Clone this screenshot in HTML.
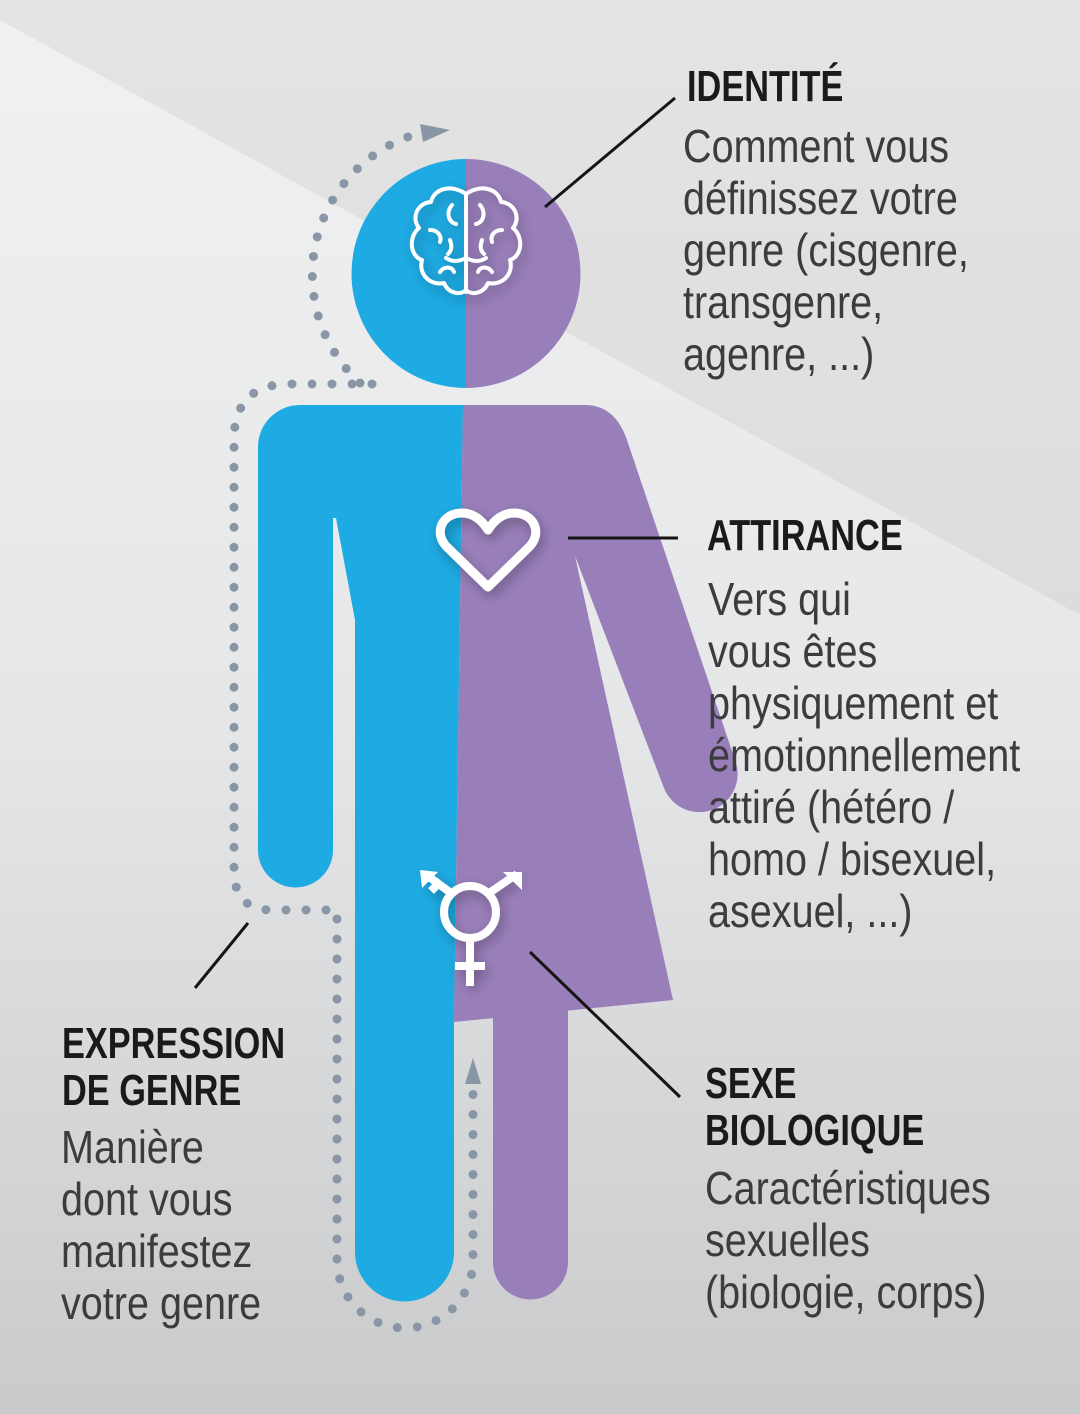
<!DOCTYPE html>
<html><head><meta charset="utf-8">
<style>
html,body{margin:0;padding:0}
body{width:1080px;height:1414px;position:relative;overflow:hidden;font-family:"Liberation Sans",sans-serif}
svg{position:absolute;left:0;top:0}
.t{position:absolute;font-weight:bold;font-size:44px;line-height:47px;color:#1a1a1a;transform:scaleX(0.78);transform-origin:0 0;white-space:nowrap}
.b{position:absolute;font-size:46px;line-height:52px;color:#3c3c3e;transform:scaleX(0.86);transform-origin:0 0;white-space:nowrap}
</style></head><body>
<svg width="1080" height="1414" viewBox="0 0 1080 1414">
<defs>
<linearGradient id="bg" x1="0" y1="0" x2="0" y2="1">
<stop offset="0" stop-color="#f1f1f2"/><stop offset="0.5" stop-color="#e6e7e8"/><stop offset="1" stop-color="#c9cacc"/>
</linearGradient>
<filter id="sh" x="-50%" y="-50%" width="200%" height="200%"><feDropShadow dx="3" dy="5" stdDeviation="6" flood-color="#000" flood-opacity="0.3"/></filter>
</defs>
<rect width="1080" height="1414" fill="url(#bg)"/>
<polygon points="0,20 0,0 1080,0 1080,615" fill="#000" opacity="0.05"/>

<g fill="none" stroke="#8896a6" stroke-width="9" stroke-linecap="round" stroke-dasharray="0 20">
<path d="M360,383 A147,147 0 0 1 428,131"/>
<path d="M372,384 H290 Q234,384 234,440 V870 Q234,910 272,910 H337 V1260 A68,68 0 0 0 473,1260 V1090"/>
</g>
<polygon points="420,124 450,130 423,142" fill="#8896a6"/>
<polygon points="473,1058 465,1084 481,1084" fill="#8896a6"/>

<path d="M466,159 A114,114 0 0 0 466,388 Z" fill="#1eaae2"/>
<path d="M466,159 A114,114 0 0 1 466,388 Z" fill="#997fba"/>

<path d="M463,405 H300 A42,42 0 0 0 258,447 V850 A37.5,37.5 0 0 0 333,850 V518 H336 L355,620 V1252 A49.5,49.5 0 0 0 454,1252 V1022 Z" fill="#1eaae2"/>
<path d="M463,405 H585 Q615,405 627,440 L735,760 A38,38 0 0 1 664,788 L575,556 L673,1000 L454,1022 Z" fill="#997fba"/>
<path d="M493,1000 H568 V1262 A37.5,37.5 0 0 1 493,1262 Z" fill="#997fba"/>

<g stroke="#151515" stroke-width="3" fill="none">
<line x1="545" y1="207" x2="675" y2="98"/>
<line x1="568" y1="538" x2="678" y2="538"/>
<line x1="530" y1="952" x2="680" y2="1097"/>
<line x1="248" y1="923" x2="195" y2="988"/>
</g>

<g fill="none" stroke="#fff" stroke-width="4" stroke-linecap="round" stroke-linejoin="round" filter="url(#sh)">
<path d="M466,194 C452,184 434,188 431,202 C417,203 411,218 419,228 C408,237 410,256 422,260 C418,274 430,286 444,283 C448,293 460,296 466,290 Z"/>
<path d="M466,194 C480,184 498,188 501,202 C515,203 521,218 513,228 C524,237 522,256 510,260 C514,274 502,286 488,283 C484,293 472,296 466,290 Z"/>
<line x1="466" y1="194" x2="466" y2="292"/>
<path d="M452,205 C446,212 448,222 456,224 M430,230 C438,230 442,236 440,242 M446,258 C452,262 458,262 466,258 M440,272 C444,266 452,266 454,272 M450,240 C452,246 452,250 448,254"/>
<path d="M480,205 C486,212 484,222 476,224 M502,230 C494,230 490,236 492,242 M486,258 C480,262 474,262 466,258 M492,272 C488,266 480,266 478,272 M482,240 C480,246 480,250 484,254"/>
</g>

<path filter="url(#sh)" d="M488,587 L447,547 C433,533 442,513 462,513 C475,513 483,522 488,530 C493,522 501,513 514,513 C534,513 543,533 529,547 Z" fill="none" stroke="#fff" stroke-width="9" stroke-linejoin="round"/>

<g filter="url(#sh)" fill="none" stroke="#fff" stroke-width="8">
<circle cx="470" cy="912" r="26"/>
<line x1="470" y1="938" x2="470" y2="986"/>
<line x1="455" y1="966" x2="485" y2="966"/>
<line x1="489" y1="893" x2="517" y2="874"/>
<line x1="451" y1="893" x2="425" y2="874"/>
<line x1="431" y1="891" x2="441" y2="881"/>
</g>
<polygon points="522,872 503,872 522,890" fill="#fff"/>
<polygon points="420,870 438,872 422,888" fill="#fff"/>
</svg>

<div class="t" style="left:687px;top:63px">IDENTITÉ</div>
<div class="b" style="left:683px;top:120px">Comment vous<br>définissez votre<br>genre (cisgenre,<br>transgenre,<br>agenre, ...)</div>

<div class="t" style="left:707px;top:512px">ATTIRANCE</div>
<div class="b" style="left:708px;top:573px">Vers qui<br>vous êtes<br>physiquement et<br>émotionnellement<br>attiré (hétéro /<br>homo / bisexuel,<br>asexuel, ...)</div>

<div class="t" style="left:705px;top:1060px">SEXE<br>BIOLOGIQUE</div>
<div class="b" style="left:705px;top:1162px">Caractéristiques<br>sexuelles<br>(biologie, corps)</div>

<div class="t" style="left:62px;top:1020px">EXPRESSION<br>DE GENRE</div>
<div class="b" style="left:61px;top:1121px">Manière<br>dont vous<br>manifestez<br>votre genre</div>
</body></html>
